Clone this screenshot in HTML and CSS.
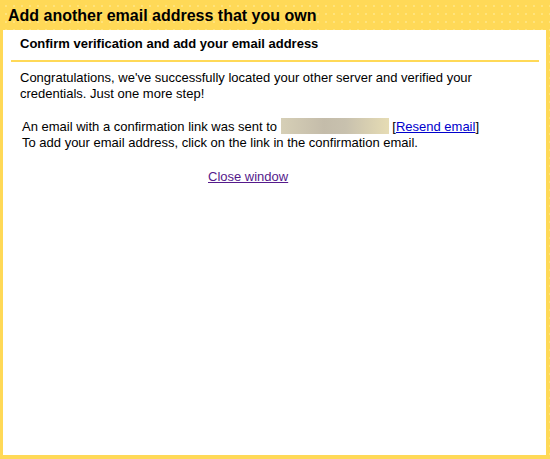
FILE: index.html
```html
<!DOCTYPE html>
<html lang="en">
<head>
	<meta charset="UTF-8">
	<title>Add another email address that you own</title>
	<link rel="stylesheet" href="styles.css">
</head>
<body>
	<div class="dialog">
		<h1 class="dialog-title">Add another email address that you own</h1>
		<div class="panel">
			<h2 class="panel-head">Confirm verification and add your email address</h2>
			<p class="intro">Congratulations, we've successfully located your other server and verified your credentials. Just one more step!</p>
			<div class="notice">
				<div>An email with a confirmation link was sent to <span class="masked"></span> [<a href="#" class="resend">Resend email</a>]</div>
				<div>To add your email address, click on the link in the confirmation email.</div>
			</div>
			<div class="close-row"><a href="#" class="close">Close window</a></div>
		</div>
	</div>
</body>
</html>
```

FILE: styles.css
```css
/*reset*/
html,body,div,h1,h2,p{
	margin: 0;
	padding: 0;
}
body{
	width: 550px;
	height: 459px;
	background-color: #ffd957;
	background-image: radial-gradient(circle, rgba(255,236,160,.7) 0.6px, transparent 1px);
	background-size: 8px 8px;
	background-position: 2px 2px;
	font: 13px/16px Arial, "Liberation Sans", sans-serif;
	color: #000;
	overflow: hidden;
}

/*dialog*/
.dialog{
	display: flex;
	flex-direction: column;
	height: 459px;
	padding: 0 4px 4px 3px;
	box-sizing: border-box;
}
.dialog-title{
	font-size: 16px;
	line-height: 20px;
	font-weight: bold;
	padding: 6px 0 4px 5px;
}
.panel{
	flex: 1;
	background: #fff;
	padding: 0 7px 0 8px;
}
.panel-head{
	font-size: 13px;
	line-height: 16px;
	font-weight: bold;
	padding: 6px 0 0 9px;
	height: 24px;
	border-bottom: 2px solid #ffd957;
}
.intro{
	padding: 8px 0 0 9px;
}
.notice{
	padding: 16px 0 0 11px;
}
.masked{
	display: inline-block;
	width: 108px;
	height: 16px;
	vertical-align: -3px;
	background: linear-gradient(90deg, #d6cfb6 0%, #c4bcaa 40%, #c8c1ae 60%, #e6dcb4 100%);
}
a{
	color: #00c;
}
.close-row{
	padding: 18px 0 0 197px;
}
.close{
	color: #551a8b;
}
```
